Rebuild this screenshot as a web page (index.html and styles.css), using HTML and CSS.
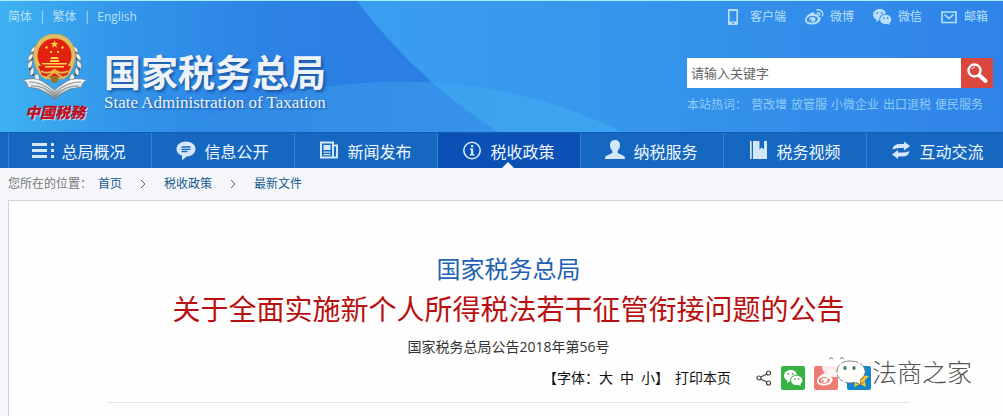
FILE: index.html
```html
<!DOCTYPE html>
<html lang="zh-CN">
<head>
<meta charset="utf-8">
<title>国家税务总局</title>
<link rel="stylesheet" href="styles.css">
</head>
<body>
<header class="header">
  <svg class="backdrop" viewBox="0 0 1003 132" preserveAspectRatio="none" aria-hidden="true">
    <defs>
      <linearGradient id="sky" x1="0" y1="0" x2="1" y2="0">
        <stop offset="0" stop-color="#3eb2f1"/><stop offset=".12" stop-color="#3295ea"/><stop offset=".27" stop-color="#2c83e4"/><stop offset=".45" stop-color="#2c7ce4"/>
      </linearGradient>
      <linearGradient id="wave" x1="0" y1="0" x2="1" y2="0">
        <stop offset="0" stop-color="#3a9eee"/><stop offset=".45" stop-color="#3595eb"/><stop offset="1" stop-color="#2f83e8"/>
      </linearGradient>
      <linearGradient id="hill" x1="0" y1="0" x2="1" y2="0">
        <stop offset="0" stop-color="#48b4f4" stop-opacity="0"/><stop offset=".4" stop-color="#42acf2" stop-opacity=".35"/><stop offset="1" stop-color="#42b0f2" stop-opacity=".55"/>
      </linearGradient>
    </defs>
    <path fill="url(#sky)" d="M0 0H1003V132H0z"/>
    <path fill="url(#wave)" d="M357 0Q388 42 432 82Q462 108 498 132H1003V0z"/>
    <path fill="url(#hill)" d="M170 132Q280 82 400 81Q520 81 622 132z"/>
  </svg>
  <div class="topbar">
    <nav class="langs" aria-label="语言"><a href="#">简体</a><span>|</span><a href="#">繁体</a><span>|</span><a href="#">English</a></nav>
    <ul class="quick">
      <li><a href="#"><svg width="16" height="18" viewBox="0 0 16 18"><path fill="currentColor" fill-rule="evenodd" d="M5 1h8q1 0 1 1v14q0 1-1 1H5q-1 0-1-1V2q0-1 1-1zm.6 2v10.500h6.800V3zM8 14.500v1.300h2v-1.300z"/></svg>客户端</a></li>
      <li><a href="#"><svg width="20" height="18" viewBox="0 0 20 18"><use href="#weibo"/></svg>微博</a></li>
      <li><a href="#"><svg width="20" height="18" viewBox="0 0 20 18"><use href="#wechat"/></svg>微信</a></li>
      <li><a href="#"><svg width="18" height="18" viewBox="0 0 18 18"><path fill="none" stroke="currentColor" stroke-width="1.600" d="M2 4h14v10.500H2zM4.500 6.500 9 10.500l4.500-4"/></svg>邮箱</a></li>
    </ul>
  </div>
  <div class="masthead">
    <a class="brand" href="#">
      <span class="seal">
        <svg width="66" height="67" viewBox="0 0 66 67" aria-hidden="true">
          <defs>
            <linearGradient id="silver" x1="0" y1="0" x2="0" y2="1"><stop offset="0" stop-color="#fff"/><stop offset=".55" stop-color="#d6d8d8"/><stop offset="1" stop-color="#73787c"/></linearGradient>
          </defs>
          <g stroke="#3d4c58" stroke-width="3.600" stroke-dasharray="2.500 3" fill="none"><path d="M14 14Q4 30 13 49"/><path d="M51 14Q61 30 52 49"/></g>
          <g fill="#eef0ee" stroke="#67717a" stroke-width=".7">
            <path d="M14 13Q8 15 9 20Q14 18 14 13zM11 20Q5 22 6 28Q12 26 11 20zM10 27Q4 30 6 36Q12 33 10 27zM11 34Q6 38 9 43Q14 40 11 34zM15 40Q10 44 15 50Q20 46 15 40z"/>
            <path d="M51 13Q57 15 56 20Q51 18 51 13zM54 20Q60 22 59 28Q53 26 54 20zM55 27Q61 30 59 36Q53 33 55 27zM54 34Q59 38 56 43Q51 40 54 34zM50 40Q55 44 50 50Q45 46 50 40z"/>
          </g>
          <path fill="#dfbd61" stroke="#c9a04e" stroke-width=".6" d="M32.500 1Q43 1 49 9Q56 19 52 31Q50 40 42 46H23Q15 40 13 31Q9 19 16 9Q22 1 32.500 1z"/>
          <path fill="#d92017" d="M16 33H49L45 42Q32 48 20 42z"/>
          <circle cx="32.500" cy="22.500" r="17" fill="#e3210f"/>
          <path fill="#ffd84a" d="m32.500 7 1 3h3l-2.400 1.800.9 3-2.500-1.800-2.500 1.800.9-3L28.500 10h3zM24 13l2 1-1 2-2-1zM41 13l-2 1 1 2 2-1zM28 18h2v2h-2zM35 18h2v2h-2zM28 26l1.500-2h6l1.500 2zM28 27h9v2h-9zM20 30h25v1.600H20zM23 33h19v1.400H23z"/>
          <path fill="none" stroke="#eab84a" stroke-width="2" d="M19 38q7 4 13.500-1Q39 42 46 38M25 44l7.500-5 7.500 5"/>
          <path fill="#9a7228" d="M28 43h9l-2 7h-5z"/>
          <path fill="url(#silver)" stroke="#67747d" stroke-width=".7" d="M1 47Q12 44 20 48Q28 53 32.500 57Q37 53 45 48Q53 44 65 47Q59 50 60 54L48 56Q40 60 32.500 66Q25 60 17 56L5 54Q7 50 1 47z"/>
          <path fill="none" stroke="#77838b" stroke-width=".9" d="M7 49q12-1 25.500 11Q46 48 59 49M9 53q13-1 23.500 10Q44 52 57 53"/>
        </svg>
        <span class="script">中國税務</span>
      </span>
      <span class="name">
        <strong class="name-zh">国家税务总局</strong>
        <span class="name-en">State Administration of Taxation</span>
      </span>
    </a>
    <form class="finder">
      <div class="searchbox">
        <input type="text" aria-label="搜索" placeholder="请输入关键字">
        <button type="button" aria-label="搜索"><svg width="24" height="24" viewBox="0 0 24 24"><circle cx="9.500" cy="9.500" r="6" fill="none" stroke="#fff" stroke-width="2.400"/><path d="M7 8q1-2 3-2" fill="none" stroke="#fff" stroke-width="1"/><path d="m14.500 14.500 6 5.500" stroke="#fff" stroke-width="4" stroke-linecap="round"/></svg></button>
      </div>
      <div class="hot"><span>本站热词：</span><a href="#">营改增</a><a href="#">放管服</a><a href="#">小微企业</a><a href="#">出口退税</a><a href="#">便民服务</a></div>
    </form>
  </div>
</header>

<nav class="menu" aria-label="主导航">
  <a href="#"><svg width="24" height="24" viewBox="0 0 24 24"><path fill="currentColor" d="M1 4h15v3H1zM1 10h15v3H1zM1 16h15v3H1zM20 4h3v3h-3zM20 10h3v3h-3zM20 16h3v3h-3z"/></svg><span>总局概况</span></a>
  <a href="#"><svg width="24" height="24" viewBox="0 0 24 24"><path fill="currentColor" d="M12 2.500c5.500 0 9.500 3.200 9.500 7.500S17.500 17.500 12.500 17.500L8 21.500v-4.700C4.500 15.500 2.500 13 2.500 10 2.500 5.700 6.500 2.500 12 2.500z"/><path stroke="#1767bd" stroke-width="1.300" d="M7.500 8h9M7.500 10.300h9M7.500 12.500h6"/></svg><span>信息公开</span></a>
  <a href="#"><svg width="24" height="24" viewBox="0 0 24 24"><path fill="none" stroke="currentColor" stroke-width="2" d="M4 3.500h12v15H4zM16 6.500h4v12h-4"/><path fill="currentColor" d="M6.500 6h7v5h-7zM6.500 12.500h7v1.200h-7zM6.500 15h7v1.200h-7z"/></svg><span>新闻发布</span></a>
  <a href="#" class="current" aria-current="page"><svg width="24" height="24" viewBox="0 0 24 24"><circle cx="12" cy="11.500" r="8.200" fill="none" stroke="currentColor" stroke-width="1.600"/><path fill="currentColor" d="M11 6h2.200v2.200H11zM10 9.500h3.200V15h1.300v1.500H9.700V15H11v-4h-1z"/></svg><span>税收政策</span></a>
  <a href="#"><svg width="24" height="24" viewBox="0 0 24 24"><path fill="currentColor" d="M12 1c3.300 0 5 2.200 5 5.200 0 2.400-1 4.300-2.300 5.500v2.200l6.300 3q1 .6 1 3.100H2q0-2.500 1-3.100l6.300-3v-2.200C8 10.500 7 8.600 7 6.200 7 3.200 8.700 1 12 1z"/></svg><span>纳税服务</span></a>
  <a href="#"><svg width="24" height="24" viewBox="0 0 24 24"><path fill="currentColor" d="M4 2h1.700v18H4zM7 2h6.500v8.500l2.200-2 2.300 2V2h3v18H7z"/></svg><span>税务视频</span></a>
  <a href="#"><svg width="24" height="24" viewBox="0 0 24 24"><path fill="currentColor" d="M3.500 10.500Q4 5 11 5h4V2.500l6 4.500-6 4.500V9h-4Q6.500 9 3.500 10.500zM20.500 12Q20 17.500 13 17.500H9V20l-6-4.500L9 11v2.500h4q4.500 0 7.500-1.500z"/></svg><span>互动交流</span></a>
</nav>

<nav class="crumbs" aria-label="位置">
  <span class="where">您所在的位置：</span>
  <a href="#">首页</a><svg width="6" height="10" viewBox="0 0 6 10"><path d="m1 1 4 4-4 4"/></svg>
  <a href="#">税收政策</a><svg width="6" height="10" viewBox="0 0 6 10"><path d="m1 1 4 4-4 4"/></svg>
  <a href="#">最新文件</a>
</nav>

<main class="article">
  <p class="issuer">国家税务总局</p>
  <h1>关于全面实施新个人所得税法若干征管衔接问题的公告</h1>
  <p class="docno">国家税务总局公告2018年第56号</p>
  <div class="tools">
    <div class="sizes"><span>【字体：</span><button type="button">大</button><button type="button">中</button><button type="button">小</button><span>】</span></div>
    <button type="button" class="print">打印本页</button>
    <div class="share">
      <svg class="share-mark" width="16" height="16" viewBox="0 0 16 16"><g fill="none" stroke="#444" stroke-width="1.200"><circle cx="3" cy="8" r="2"/><circle cx="12.500" cy="3" r="2"/><circle cx="12.500" cy="13" r="2"/><path d="m4.800 7 6-3M4.800 9l6 3"/></g></svg>
      <a class="tile wechat" href="#" aria-label="微信"><svg width="20" height="18" viewBox="0 0 20 18"><use href="#wechat"/></svg></a>
      <a class="tile weibo" href="#" aria-label="微博"><svg width="20" height="18" viewBox="0 0 20 18"><use href="#weibo"/></svg></a>
      <a class="tile qzone" href="#" aria-label="QQ空间"><svg width="24" height="24" viewBox="0 0 24 24"><path fill="#fdc72f" d="m13 4 2.800 5.500 6.200.5-4.500 4.500 1.500 6.500-6-3-6 3 1.500-6.500L4 10l6-.5z"/><path fill="none" stroke="#e58f1b" stroke-width="1.500" d="M9 12h7l-6 5h7"/></svg></a>
      <div class="watermark">
        <svg width="48" height="36" viewBox="0 0 48 36" aria-hidden="true">
          <path fill="#fff" fill-opacity=".85" d="M16 1C7 1 2 6 2 12c0 4 2 7 5 9l-1 5 6-3 8 0Q30 20 30 12 30 1 16 1z"/>
          <path fill="#fffef8" stroke="#666" stroke-width=".8" stroke-dasharray="9 2" d="M30 7C21 7 17 12 17 18s5 11 13 11q3 0 5-1l6 3-1-5c3-2 5-5 5-8 0-7-6-11-15-11z"/>
          <path fill="none" stroke="#777" stroke-width="1" d="M9 5q2-3 4 0M20 5q2-3 4 0"/>
          <ellipse cx="25" cy="14" rx="1.600" ry="2" fill="#28788c"/><ellipse cx="34" cy="14" rx="1.600" ry="2" fill="#28788c"/>
        </svg>
        <span>法商之家</span>
      </div>
    </div>
  </div>
</main>

<svg class="symbols" width="0" height="0" aria-hidden="true">
  <symbol id="weibo" viewBox="0 0 20 18">
    <path fill="currentColor" fill-rule="evenodd" d="M8 4.500c1.500-.6 3 0 2.500 2 2.200-.8 4.500-.4 3.800 1.800 4 1.200 2.500 5.200-1 6.900-4.600 2.300-12.300 1.300-12.300-3C1 9 5 5.500 8 4.500zM7.800 8C4.500 8.300 2.500 10 2.700 12c.2 2 2.700 3 6 2.700 3.200-.4 5.300-2 5.100-4C13.600 8.700 11 7.700 7.800 8zM8.300 8.900c2.200-.1 3.700 1.100 3.200 2.900-.5 1.600-2.400 2.500-4.200 2.200-1.900-.3-2.800-1.800-2.100-3.300.5-1.100 1.800-1.800 3.100-1.800zM7 11.200a1.100 1.100 0 1 0 .1 2.100 1.100 1.100 0 0 0-.1-2.100z"/>
    <path fill="none" stroke="currentColor" stroke-width="1.400" stroke-linecap="round" d="M13 1.800c3.500-.7 6.500 2 5.500 6M13.500 4.800c1.500-.2 2.500.8 2 2.400"/>
  </symbol>
  <symbol id="wechat" viewBox="0 0 20 18">
    <path fill="currentColor" fill-rule="evenodd" d="M7.500 1C11 1 13.500 3 14 5.700 9.800 5.700 7 8.300 7.300 12L4 14l.5-2.500C2.300 10.500 1 8.800 1 6.700 1 3.500 4 1 7.500 1zM5.200 3.900a.9.900 0 1 0 .1 0zM9.700 3.900a.9.900 0 1 0 .1 0z"/>
    <path fill="currentColor" fill-rule="evenodd" d="M13.700 6.700c3.200 0 5.600 2 5.600 4.700 0 1.500-.8 2.800-2 3.700l.4 2-2.200-1.200c-4 .9-7.300-1.300-7.300-4.500 0-2.700 2.300-4.700 5.500-4.700zM11.700 9.200a.8.800 0 1 0 .1 0zM15.600 9.200a.8.800 0 1 0 .1 0z"/>
  </symbol>
</svg>
</body>
</html>
```

FILE: styles.css
```css
* { box-sizing: border-box; }

body {
  margin: 0;
  overflow-x: hidden;
  background: #f5f6fa;
  color: #333;
  font: 12px/16px "Open Sans", "Noto Sans CJK SC", sans-serif;
}

a { color: inherit; text-decoration: none; }
button { padding: 0; border: 0; background: none; color: inherit; font: inherit; cursor: pointer; }
svg { display: block; flex: none; }
p, h1, ul { margin: 0; padding: 0; }
.symbols { display: none; }

/* Header */
.header {
  position: relative;
  border-top: 1px solid #a9ecfa;
  background: #2c7ce4;
  color: #b9e0fb;
}
.backdrop { position: absolute; inset: 0; width: 100%; height: 100%; }
.topbar, .masthead { position: relative; display: flex; justify-content: space-between; }
.topbar { height: 32px; padding: 0 15px 0 8px; align-items: center; }
.langs { display: flex; gap: 7px; }
.quick { display: flex; gap: 18px; list-style: none; }
.quick a { display: flex; align-items: center; gap: 6px; }
.quick li:first-child a { gap: 10px; }

.masthead { padding: 0 10px 8px 22px; }
.brand { display: flex; gap: 16px; }
.seal { display: flex; flex-direction: column; align-items: center; }
.script {
  color: #c00d1c;
  font: italic 900 15px/24px "Noto Sans CJK TC", sans-serif;
  text-shadow: 1px 1px 0 #b9d3ee;
}
.name { display: flex; flex-direction: column; padding-top: 19px; color: #eef3fa; }
.name-zh { font-size: 37px; line-height: 41px; font-weight: 700; text-shadow: 2px 2px 3px #1a55a0; }
.name-en { font: 17px/20px "Liberation Serif", serif; text-shadow: 1px 1px 2px #1a55a0; }

.finder { width: 306px; padding-top: 25px; }
.searchbox { display: flex; height: 30px; }
.searchbox input {
  flex: 1;
  min-width: 0;
  padding: 0 4px;
  border: 0;
  background: #fff;
  color: #555;
  font: 13px/20px "Noto Sans CJK SC", sans-serif;
}
.searchbox input::placeholder { color: #666; opacity: 1; }
.searchbox button { display: grid; place-items: center; width: 32px; background: #d9473f; }
.hot { display: flex; gap: 4px; margin-top: 9px; color: #8fccfa; white-space: nowrap; }

/* Main menu */
.menu {
  display: flex;
  height: 36px;
  padding-left: 8px;
  overflow: hidden;
  border-top: 1px solid #0f5cb2;
  background: #1567bf;
  color: #d5e8fb;
}
.menu a {
  position: relative;
  display: flex;
  flex: 1 0 143px;
  justify-content: center;
  align-items: center;
  gap: 6px;
  padding-right: 3px;
  border-left: 1px solid #3484d3;
  font-size: 16px;
  line-height: 24px;
}
.menu span { padding-top: 2px; color: #f2f8ff; }
.menu .current { background: #0b50b4; }
.menu .current::after {
  content: "";
  position: absolute;
  bottom: 0;
  left: 50%;
  margin-left: -7px;
  border: 6px solid transparent;
  border-top: 0;
  border-bottom-color: #f5f6fa;
}

/* Breadcrumb */
.crumbs { display: flex; align-items: center; height: 32px; padding-left: 8px; color: #14598f; }
.crumbs .where { margin-right: 6px; color: #777; }
.crumbs svg { margin: 0 18px; fill: none; stroke: #666; }

/* Article */
.article {
  margin: 0 -6px 0 8px;
  padding: 50px 98px 14px;
  border: 1px solid #cfd1d8;
  border-bottom: 0;
  background: #fefefe;
  text-align: center;
}
.issuer { color: #1f62b4; font-size: 24px; line-height: 36px; }
h1 { color: #b9100f; font-size: 28px; line-height: 44px; font-weight: 400; }
.docno { font-size: 14px; line-height: 32px; }
.tools {
  display: flex;
  justify-content: flex-end;
  align-items: center;
  height: 40px;
  padding: 0 39px 10px 0;
  border-bottom: 1px solid #e6e6e8;
  color: #111;
  font-size: 14px;
  line-height: 20px;
}
.sizes { display: flex; }
.sizes button + button { margin-left: 7px; }
.print { margin: 0 25px 0 6px; }
.share { position: relative; display: flex; align-items: center; gap: 9px; }
.tile { display: grid; place-items: center; width: 24px; height: 24px; border-radius: 2px; color: #fff; }
.wechat { background: #37b344; }
.weibo { background: #ec7b74; }
.qzone { background: #1585cd; }
.watermark {
  position: absolute;
  left: 64px;
  top: -12px;
  display: flex;
  align-items: center;
  gap: 4px;
  color: #555;
  font-size: 25px;
  font-weight: 300;
  line-height: 36px;
  white-space: nowrap;
  text-shadow: 1px 1px 0 #fff;
}
```
